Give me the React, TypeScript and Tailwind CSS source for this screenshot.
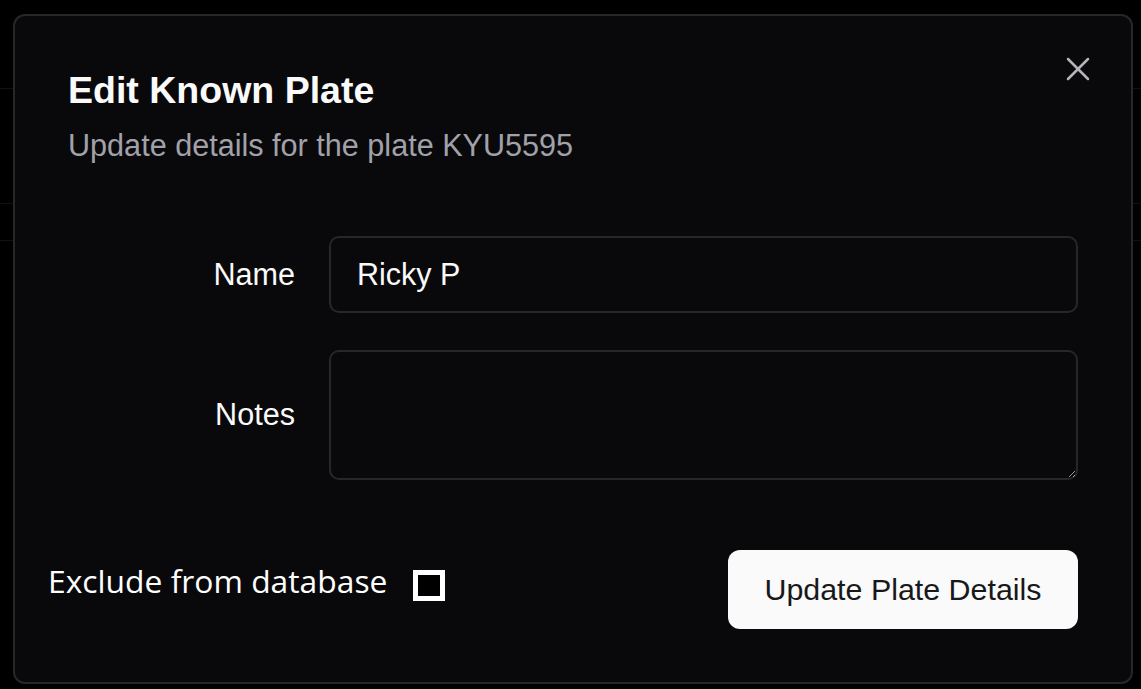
import React, { useState } from 'react';
import { X } from 'lucide-react';

export default function App() {
  const [name, setName] = useState('Ricky P');
  const [notes, setNotes] = useState('');
  const [exclude, setExclude] = useState(false);

  return (
    <div className="relative w-[1141px] h-[689px] bg-black overflow-hidden font-['Liberation_Sans',Arial,sans-serif]">
      {/* dimmed page behind the dialog */}
      <div className="h-[89px] border-b border-[#121214]" />
      <div className="h-[115px] border-b border-[#121214]" />
      <div className="h-[37px] border-b border-[#121214]" />

      <div className="absolute left-[13px] top-[14px] w-[1120px] h-[670px] rounded-[12px] border-2 border-[#27272a] bg-[#09090b] pl-[53px] pr-[53px] pt-[52px]">
        <button className="absolute top-[33px] right-[33px] text-[#b4b4ba]">
          <X size={40} strokeWidth={1.5} />
        </button>

        <h2 className="text-[37.5px] leading-[44px] font-bold text-[#fafafa]">Edit Known Plate</h2>
        <p className="mt-[15px] text-[30.6px] leading-[36px] text-[#a1a1aa]">Update details for the plate KYU5595</p>

        <div className="mt-[73px] flex flex-col gap-[37px]">
          <div className="grid grid-cols-4 items-center gap-x-[34px]">
            <label className="text-right text-[30.6px] text-[#fafafa] font-medium">Name</label>
            <input
              value={name}
              onChange={(e) => setName(e.target.value)}
              className="col-span-3 h-[77px] rounded-[10px] border-2 border-[#27272a] bg-transparent px-[26px] text-[30.5px] text-[#fafafa] outline-none"
            />
          </div>
          <div className="grid grid-cols-4 items-center gap-x-[34px]">
            <label className="text-right text-[30.6px] text-[#fafafa] font-medium">Notes</label>
            <textarea
              value={notes}
              onChange={(e) => setNotes(e.target.value)}
              className="col-span-3 h-[130px] rounded-[10px] border-2 border-[#27272a] bg-transparent px-[26px] py-[12px] text-[30px] text-[#fafafa] outline-none [color-scheme:dark]"
            />
          </div>
        </div>

        <div className="mt-[70px] flex items-start justify-between">
          <div className="-ml-[20px] mt-[9px] flex items-start gap-[26px] font-['Open_Sans',sans-serif] text-[31.8px] leading-[normal] text-white">
            <span>Exclude from database</span>
            <button
              onClick={() => setExclude(!exclude)}
              className="mt-[11px] w-[32px] h-[31px] border-[5px] border-white bg-black"
            >
              {exclude && <span className="block w-full h-full bg-white" />}
            </button>
          </div>
          <button className="w-[350px] h-[79px] rounded-[12px] bg-[#fafafa] text-[30.4px] text-[#18181b]">
            Update Plate Details
          </button>
        </div>
      </div>
    </div>
  );
}
